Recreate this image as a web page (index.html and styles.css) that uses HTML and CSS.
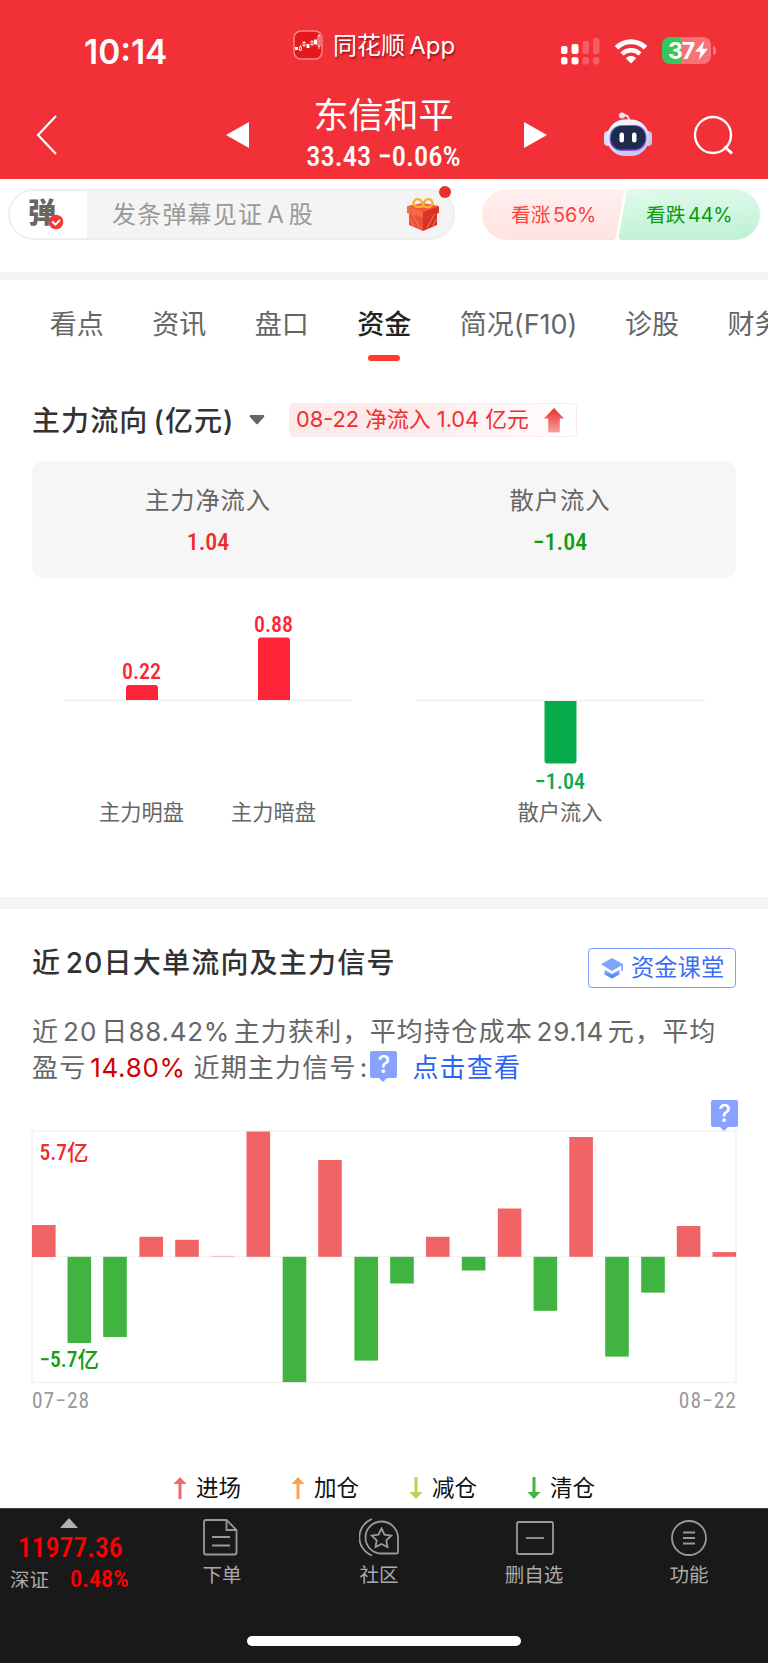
FILE: index.html
```html
<!DOCTYPE html>
<html lang="zh-CN">
<head>
    <meta charset="UTF-8">
    <title>东信和平 - 资金</title>
    <link rel="stylesheet" href="styles.css">
</head>
<body>
    <header class="header">
        <div class="status">
            <span class="time">10:14</span>
            <div class="app-name">
                <svg width="30" height="30" viewBox="0 0 30 30">
                    <rect x="1" y="1" width="28" height="28" rx="7" fill="#e5191d" stroke="#f88" stroke-width="1.4"/>
                    <g fill="#fff">
                        <rect x="2" y="17" width="3" height="3"/>
                        <rect x="13.500" y="14" width="3" height="4"/>
                        <rect x="21" y="9.500" width="3" height="5"/>
                    </g>
                    <g fill="#e5191d" stroke="#fff" stroke-width="0.8">
                        <path d="M7.500 15v6M11 11v6M19 10v6M26 4v15"/>
                        <rect x="6.500" y="17" width="2" height="3"/>
                        <rect x="10" y="12.500" width="2" height="3"/>
                        <rect x="18" y="11.500" width="2" height="3"/>
                        <rect x="25" y="6" width="2" height="10"/>
                    </g>
                </svg>
                <span>同花顺 App</span>
            </div>
            <div class="status-icons">
                <svg class="signal" width="39" height="28" viewBox="0 0 39 28" fill="#fff">
                    <rect x="0" y="9" width="6.500" height="8" rx="2"/>
                    <rect x="10.500" y="7" width="7" height="10" rx="2"/>
                    <rect x="0" y="20" width="6.500" height="7.500" rx="2.500"/>
                    <rect x="10.500" y="20" width="7" height="7.500" rx="2.500"/>
                    <g opacity="0.22">
                        <rect x="21.500" y="4" width="6.500" height="13" rx="2"/>
                        <rect x="32" y="1" width="6.500" height="16" rx="2"/>
                        <rect x="21.500" y="20" width="6.500" height="7.500" rx="2.500"/>
                        <rect x="32" y="20" width="6.500" height="7.500" rx="2.500"/>
                    </g>
                </svg>
                <svg class="wifi" width="34" height="25" viewBox="0 0 34 25">
                    <path d="M2.500 8.800a20.500 20.500 0 0 1 29 0" fill="none" stroke="#fff" stroke-width="5"/>
                    <path d="M8 15a12.800 12.800 0 0 1 18 0" fill="none" stroke="#fff" stroke-width="4.500"/>
                    <path d="M17 24.500l-5.200-5.300a7.500 7.500 0 0 1 10.400 0z" fill="#fff"/>
                </svg>
                <div class="battery">
                    <span>37</span>
                    <svg width="13" height="19" viewBox="0 0 12 18"><path d="M8.500 0L0 10.300h5L3.500 18 12 7.300H7z" fill="#fff"/></svg>
                </div>
                <i class="battery-cap"></i>
            </div>
        </div>
        <div class="nav">
            <svg class="back" width="24" height="42" viewBox="0 0 24 42"><path d="M21 2L3 21l18 19" fill="none" stroke="#fff" stroke-width="2.200"/></svg>
            <svg class="prev" width="23" height="26" viewBox="0 0 23 26"><path d="M23 0v26L0 13z" fill="#fff"/></svg>
            <div class="stock">
                <h1>东信和平</h1>
                <p class="num">33.43 −0.06%</p>
            </div>
            <svg class="next" width="23" height="26" viewBox="0 0 23 26"><path d="M0 0v26l23-13z" fill="#fff"/></svg>
            <svg class="robot" width="48" height="45" viewBox="0 0 48 45">
                <defs>
                    <linearGradient id="shell" x1="0" y1="0" x2="0.400" y2="1">
                        <stop offset="0" stop-color="#fff"/>
                        <stop offset="1" stop-color="#c9ccf0"/>
                    </linearGradient>
                    <linearGradient id="visor" x1="0" y1="0" x2="1" y2="1">
                        <stop offset="0" stop-color="#58c8f5"/>
                        <stop offset="0.400" stop-color="#7a3fd8"/>
                        <stop offset="1" stop-color="#8d6cf5"/>
                    </linearGradient>
                </defs>
                <path d="M18 3.500c5-1 7 1 7 6" fill="none" stroke="#dfe3fa" stroke-width="2"/>
                <circle cx="18" cy="3.500" r="3" fill="#dfe8fb"/>
                <rect x="0" y="19" width="8" height="15" rx="4" fill="#d9dbf7"/>
                <rect x="40" y="19" width="8" height="15" rx="4" fill="#c5c7f1"/>
                <rect x="3" y="7.500" width="42" height="36.500" rx="18" fill="url(#shell)"/>
                <rect x="5.500" y="13" width="37" height="26" rx="12" fill="url(#visor)"/>
                <rect x="6.800" y="14" width="34.500" height="23.500" rx="11" fill="#202a4c"/>
                <rect x="15.500" y="20.500" width="4.500" height="10" rx="2.200" fill="#fff"/>
                <rect x="28" y="20.500" width="4.500" height="10" rx="2.200" fill="#fff"/>
            </svg>
            <svg class="search" width="41" height="41" viewBox="0 0 41 41" fill="none" stroke="#fff" stroke-width="2.400">
                <circle cx="20" cy="20" r="18"/>
                <path d="M31.500 31.500l7.500 7" stroke-width="3"/>
            </svg>
        </div>
    </header>

    <div class="danmu">
        <div class="danmu-input">
            <div class="danmu-switch">
                <b>弹</b>
                <svg width="16" height="16" viewBox="0 0 16 16"><circle cx="8" cy="8" r="7.300" fill="#f33a30"/><path d="M4.200 7.500l3.200 3.200L12 6" fill="none" stroke="#fff" stroke-width="2"/></svg>
            </div>
            <span class="placeholder">发条弹幕见证 A 股</span>
            <svg class="gift" width="34" height="35" viewBox="0 0 34 35">
                <path d="M1 9l16-3 16 3-16 7z" fill="#f2573a"/>
                <path d="M1 9l16 6v6L1 16z" fill="#f4694a"/>
                <path d="M33 9l-16 6v6l16-5z" fill="#d93327"/>
                <path d="M3 16.500l14 4V34L3 28z" fill="#ee4f36"/>
                <path d="M31 16.500l-14 4V34l14-6z" fill="#d43325"/>
                <path d="M7 18l7 13M4 21l4 9M21 31l7-13M27 29l3-7" stroke="#f58a63" stroke-width="1.200" opacity="0.700"/>
                <path d="M17 9C10 11.500 6 8.500 8 4.500s8-3 9 4.500c1-7.500 7-8.500 9-4.500s-2 7-9 4.500z" fill="none" stroke="#f3b133" stroke-width="2.400"/>
            </svg>
            <i class="dot"></i>
        </div>
        <div class="vote">
            <svg class="vote-bg" width="278" height="51" viewBox="0 0 278 51">
                <defs>
                    <linearGradient id="up" x1="0" y1="0" x2="0" y2="1"><stop offset="0" stop-color="#fff0ef"/><stop offset="1" stop-color="#ffe3e0"/></linearGradient>
                    <linearGradient id="down" x1="0" y1="0" x2="0.150" y2="1"><stop offset="0" stop-color="#e2faec"/><stop offset="1" stop-color="#c1f2d6"/></linearGradient>
                </defs>
                <path d="M25.500 0H139q3.500 0 2.900 3.500L134.300 47q-.8 4-4 4H25.500a25.500 25.500 0 0 1 0-51z" fill="url(#up)"/>
                <path d="M149 0H252.500a25.500 25.500 0 0 1 0 51H140q-4 0-3.200-4L144.500 4q.8-4 4.500-4z" fill="url(#down)"/>
            </svg>
            <span class="vote-up">看涨 56%</span>
            <span class="vote-down">看跌 44%</span>
        </div>
    </div>

    <nav class="tabs">
        <span class="cut">?</span>
        <span>看点</span>
        <span>资讯</span>
        <span>盘口</span>
        <span class="active">资金</span>
        <span>简况(F10)</span>
        <span>诊股</span>
        <span>财务</span>
    </nav>

    <section class="flow">
        <div class="flow-head">
            <h2>主力流向 (亿元)</h2>
            <svg class="caret" width="16" height="10" viewBox="0 0 16 10"><path d="M1.500 0h13q1.500 0.500 .5 2L9 8.700q-1 1-2 0L1 2Q0 .5 1.500 0z" fill="#666"/></svg>
            <div class="tag">
                <span>08-22 净流入 1.04 亿元</span>
                <svg width="20" height="25" viewBox="0 0 20 25">
                    <defs><linearGradient id="arrow" x1="0" y1="0" x2="0" y2="1"><stop offset="0" stop-color="#e8302d"/><stop offset="1" stop-color="#f8a09e"/></linearGradient></defs>
                    <path d="M10 0l10 10.500h-4.200V23q0 1.500-1.500 1.500H5.700q-1.500 0-1.500-1.500V10.500H0z" fill="url(#arrow)"/>
                </svg>
            </div>
        </div>
        <div class="summary">
            <div>
                <p>主力净流入</p>
                <b class="num red">1.04</b>
            </div>
            <div>
                <p>散户流入</p>
                <b class="num green">−1.04</b>
            </div>
        </div>
        <svg class="flow-chart" width="704" height="250" viewBox="32 600 704 250">
            <path d="M64 700.500h288M416 700.500h289" stroke="#f0f0f0" stroke-width="1.500"/>
            <path d="M126 700v-12q0-3 3-3h26q3 0 3 3v12z" fill="#ff2436"/>
            <path d="M258 700v-59.500q0-3 3-3h26q3 0 3 3V700z" fill="#ff2436"/>
            <path d="M544.500 701v59.500q0 3 3 3h26q3 0 3-3V701z" fill="#08ab4b"/>
            <g class="bar-value">
                <text x="141.500" y="679" fill="#ff2436">0.22</text>
                <text x="273.500" y="632" fill="#ff2436">0.88</text>
                <text x="560" y="789" fill="#08ab4b">−1.04</text>
            </g>
            <g class="bar-name">
                <text x="141.500" y="820">主力明盘</text>
                <text x="273.500" y="820">主力暗盘</text>
                <text x="560" y="820">散户流入</text>
            </g>
        </svg>
    </section>

    <section class="orders">
        <div class="orders-head">
            <h2>近 20日大单流向及主力信号</h2>
            <a class="lesson">
                <svg width="22" height="21" viewBox="0 0 22 21">
                    <defs><linearGradient id="cap" x1="0" y1="0" x2="0" y2="1"><stop offset="0" stop-color="#8fb0ff"/><stop offset="1" stop-color="#4478fb"/></linearGradient></defs>
                    <path d="M11 0l11 6.300V13h-1.600V7.500L11 13 0 6.300z" fill="#7ea4ff"/>
                    <path d="M3.500 11.800L11 16l7.500-4.200v4.700L11 20.500l-7.500-4z" fill="url(#cap)"/>
                </svg>
                <span>资金课堂</span>
            </a>
        </div>
        <p class="desc">
            <span class="line">近 20 日<b>88.42%</b> 主力获利，平均持仓成本 <b>29.14</b> 元，平均</span>
            <span class="line">盈亏 <em>14.80%</em> 近期主力信号<span class="colon">:</span><i class="help">?</i><a>点击查看</a></span>
        </p>
        <div class="help-row"><i class="help">?</i></div>
        <svg class="orders-chart" width="706" height="254" viewBox="31 1130.500 706 254">
            <rect x="32" y="1131.500" width="704" height="251.500" fill="none" stroke="#f2f2f2" stroke-width="1.500"/>
            <path d="M32 1257.300h704" stroke="#f0f0f0"/>
            <g fill="#f06466">
                <rect x="32" y="1225.500" width="23.600" height="32"/>
                <rect x="139.400" y="1237.300" width="23.600" height="20"/>
                <rect x="175.200" y="1240.300" width="23.600" height="17"/>
                <rect x="211" y="1256.300" width="23.600" height="1" opacity="0.400"/>
                <rect x="246.500" y="1132" width="23.600" height="125.300"/>
                <rect x="318.200" y="1160.500" width="23.600" height="96.800"/>
                <rect x="426" y="1237.300" width="23.600" height="20"/>
                <rect x="497.800" y="1209" width="23.600" height="48.300"/>
                <rect x="569.300" y="1137.500" width="23.600" height="119.800"/>
                <rect x="676.800" y="1226.500" width="23.600" height="30.800"/>
                <rect x="712.500" y="1252.600" width="23.600" height="4.700"/>
            </g>
            <g fill="#41b341">
                <rect x="67.500" y="1257.300" width="23.600" height="86.200"/>
                <rect x="103.200" y="1257.300" width="23.600" height="80.200"/>
                <rect x="282.700" y="1257.300" width="23.600" height="125.300"/>
                <rect x="354.400" y="1257.300" width="23.600" height="103.800"/>
                <rect x="390.200" y="1257.300" width="23.600" height="26.700"/>
                <rect x="461.800" y="1257.300" width="23.600" height="13.700"/>
                <rect x="533.600" y="1257.300" width="23.600" height="54"/>
                <rect x="605.200" y="1257.300" width="23.600" height="99.800"/>
                <rect x="641.200" y="1257.300" width="23.600" height="35.800"/>
            </g>
            <text class="axis" x="39.500" y="1160.500" fill="#ee2c2c">5.7亿</text>
            <text class="axis" x="39.500" y="1367.500" fill="#129c12">−5.7亿</text>
        </svg>
        <div class="dates num">
            <span>07−28</span>
            <span>08−22</span>
        </div>
        <div class="legend">
            <span><svg width="14" height="22" viewBox="0 0 14 22"><path d="M7 0l6.500 7H8.500v15h-3V7H.5z" fill="#f0696b"/></svg>进场</span>
            <span><svg width="14" height="22" viewBox="0 0 14 22"><path d="M7 0l6.500 7H8.500v15h-3V7H.5z" fill="#fda14f"/></svg>加仓</span>
            <span><svg width="14" height="22" viewBox="0 0 14 22"><path d="M7 22l6.500-7H8.500V0h-3v15H.5z" fill="#b3d552"/></svg>减仓</span>
            <span><svg width="14" height="22" viewBox="0 0 14 22"><path d="M7 22l6.500-7H8.500V0h-3v15H.5z" fill="#45b444"/></svg>清仓</span>
        </div>
    </section>

    <footer class="toolbar">
        <div class="index">
            <svg width="18" height="10" viewBox="0 0 18 10"><path d="M9 0l9 10H0z" fill="#b0b0b0"/></svg>
            <b class="num index-value">11977.36</b>
            <div class="index-row"><span>深证</span><b class="num">0.48%</b></div>
        </div>
        <div class="tool tool-order">
            <svg width="40" height="40" viewBox="0 0 40 40">
                <path d="M4 3H24.500l10 10V35.500q0 2-2 2H4q-2 0-2-2V5q0-2 2-2z"/>
                <path d="M24.500 3v10h10M10 20h18M10 28.500h18"/>
            </svg>
            <span>下单</span>
        </div>
        <div class="tool tool-club">
            <svg width="40" height="40" viewBox="0 0 40 40">
                <path d="M22.500 4.500A16.500 16.500 0 0 1 39 21v14q0 1.500-1.500 1.500H22.500a16 16 0 0 1 0-32z"/>
                <path d="M13 2A19.500 19.500 0 0 0 13 38.500"/>
                <path d="M22.500 11.500l3 6.200 6.800 1-5 4.700 1.200 6.700-6-3.200-6 3.200 1.200-6.700-5-4.700 6.800-1z"/>
            </svg>
            <span>社区</span>
        </div>
        <div class="tool tool-del">
            <svg width="40" height="40" viewBox="0 0 40 40"><rect x="3" y="5" width="36" height="32" rx="1.500"/><path d="M12 21h18"/></svg>
            <span>删自选</span>
        </div>
        <div class="tool tool-more">
            <svg width="40" height="40" viewBox="0 0 40 40"><circle cx="20" cy="21" r="17"/><path d="M14 15.500h12M14 21h12M14 26.500h12"/></svg>
            <span>功能</span>
        </div>
        <i class="home-bar"></i>
    </footer>
</body>
</html>
```
FILE: styles.css
```css
* {
    box-sizing: border-box;
}

body {
    margin: 0;
    width: 768px;
    height: 1663px;
    overflow: hidden;
    background-color: #fff;
    color: #323232;
    font-family: Inter, "Noto Sans CJK SC", sans-serif;
    display: flex;
    flex-direction: column;
}

h1, h2, p {
    margin: 0;
}

i, em {
    font-style: normal;
}

svg {
    display: block;
    flex-shrink: 0;
}

.num {
    font-family: Roboto, "Noto Sans CJK SC", sans-serif;
    font-stretch: 85%;
    font-weight: 500;
}

.red {
    color: #ee2c2c;
}

.green {
    color: #129c12;
}

/* Header */
.header {
    height: 179px;
    flex-shrink: 0;
    background-color: #f23038;
    color: #fff;
}

.status {
    display: flex;
    height: 90px;
    padding: 30px 52px 0 84px;
}

.time {
    width: 209px;
    padding-top: 2px;
    font-size: 33.5px;
    font-weight: 600;
    line-height: 40px;
}

.app-name {
    display: flex;
    gap: 10px;
    width: 268px;
    height: 30px;
    font-size: 24px;
    line-height: 31px;
    word-spacing: -2.5px;
    white-space: nowrap;
    text-shadow: 1px 2px 2px rgba(90, 0, 0, 0.6);
}

.status-icons {
    display: flex;
    padding-top: 7px;
}

.wifi {
    margin: 2px 14px 0 14px;
}

.battery {
    display: flex;
    align-items: center;
    gap: 1px;
    width: 49px;
    height: 27px;
    padding-left: 6px;
    border-radius: 8px;
    background: linear-gradient(90deg, #35c759 38%, #f87177 38%);
    font-size: 23px;
    font-weight: 700;
    letter-spacing: -1px;
}

.battery-cap {
    width: 3px;
    height: 9px;
    margin: 9px 0 0 2px;
    border-radius: 0 4px 4px 0;
    background-color: #f87177;
}

.nav {
    display: flex;
    height: 89px;
    padding-left: 35px;
}

.back {
    margin-top: 24px;
}

.prev {
    margin: 32px 0 0 167px;
}

.stock {
    width: 275px;
    padding-right: 6px;
    text-align: center;
}

.stock h1 {
    font-size: 35px;
    font-weight: 400;
    line-height: 50px;
}

.stock .num {
    font-size: 28.5px;
    line-height: 34px;
}

.next {
    margin-top: 32px;
}

.robot {
    margin: 22px 0 0 57px;
}

.search {
    margin: 25px 0 0 41px;
}

/* Danmu bar */
.danmu {
    display: flex;
    gap: 27px;
    height: 101px;
    padding: 10px 8px 0;
    flex-shrink: 0;
    border-bottom: 8px solid #f4f4f4;
}

.danmu-input {
    position: relative;
    display: flex;
    width: 447px;
    height: 51px;
    border: 2px solid #efefef;
    border-radius: 26px;
    background-color: #f4f4f4;
}

.danmu-switch {
    position: relative;
    width: 77px;
    padding-left: 18px;
    border-radius: 24px 0 0 24px;
    background-color: #fff;
    color: #666;
    font-size: 28px;
    line-height: 44px;
}

.danmu-switch b {
    font-weight: 900;
}

.danmu-switch svg {
    position: absolute;
    left: 38px;
    top: 23px;
}

.placeholder {
    padding-left: 25px;
    width: 309px;
    color: #999;
    font-size: 24px;
    line-height: 48px;
    letter-spacing: 1.2px;
    word-spacing: -4px;
    white-space: nowrap;
}

.gift {
    margin: 6px 0 0 10px;
}

.dot {
    position: absolute;
    right: 2px;
    top: -5px;
    width: 12px;
    height: 12px;
    border-radius: 50%;
    background-color: #e8302d;
}

.vote {
    position: relative;
    display: flex;
    width: 278px;
    height: 51px;
    font-size: 19.7px;
    line-height: 53px;
    word-spacing: -3px;
}

.vote-bg {
    position: absolute;
    left: 0;
    top: 0;
    z-index: -1;
}

.vote-up {
    width: 136px;
    padding-left: 29px;
    color: #ff4040;
}

.vote-down {
    padding-left: 28px;
    color: #0a9a0a;
}

/* Tabs */
.tabs {
    display: flex;
    gap: 48.5px;
    height: 104px;
    padding-top: 25px;
    flex-shrink: 0;
    overflow: hidden;
    color: #666;
    font-size: 27px;
    line-height: 40px;
    white-space: nowrap;
}

.tabs .cut {
    width: 16px;
    margin-left: -13px;
    margin-right: 0.5px;
    text-align: right;
}

.tabs .active {
    color: #222;
    font-weight: 500;
}

.tabs .active::after {
    content: "";
    display: block;
    width: 32px;
    height: 6px;
    margin: 10px auto 0;
    border-radius: 3px;
    background-color: #ff3b30;
}

.tabs span:nth-child(7) {
    margin-left: -1px;
}

/* Main capital flow */
.flow {
    height: 525px;
    padding: 19px 32px 0;
    flex-shrink: 0;
    border-bottom: 12px solid #f4f4f4;
}

.flow-head {
    display: flex;
    align-items: center;
    height: 34px;
}

.flow-head h2 {
    width: 217px;
    padding-top: 1px;
    font-size: 28px;
    font-weight: 500;
    line-height: 34px;
    letter-spacing: 1.1px;
    word-spacing: -3.5px;
    white-space: nowrap;
}

.caret {
    margin-right: 24px;
}

.tag {
    display: flex;
    align-items: center;
    width: 288px;
    height: 34px;
    padding-left: 6px;
    border: 1px solid #fdeaea;
    border-radius: 4px;
    background: linear-gradient(90deg, #fdeaea 40%, #fff);
    color: #ee3030;
    font-size: 21.8px;
    line-height: 30px;
    white-space: nowrap;
}

.tag span {
    width: 248px;
    padding-bottom: 2px;
}

.summary {
    display: grid;
    grid-template-columns: 1fr 1fr;
    height: 117px;
    margin-top: 24px;
    padding-top: 19px;
    border-radius: 12px;
    background-color: #f6f6f6;
    color: #666;
    text-align: center;
}

.summary p {
    font-size: 24.3px;
    line-height: 40px;
    letter-spacing: 0.9px;
}

.summary .num {
    display: block;
    margin-top: 5px;
    font-size: 24px;
    line-height: 35px;
}

.flow-chart {
    margin-top: 22px;
}

.flow-chart text {
    text-anchor: middle;
}

.bar-value {
    font-family: Roboto, sans-serif;
    font-stretch: 85%;
    font-size: 22px;
    font-weight: 500;
}

.bar-name {
    font-size: 21.2px;
    fill: #666;
}

/* Large orders over 20 days */
.orders {
    height: 599px;
    padding: 39px 32px 0;
    flex-shrink: 0;
}

.orders-head {
    display: flex;
    justify-content: space-between;
}

.orders-head h2 {
    font-size: 28px;
    font-weight: 500;
    line-height: 30px;
    letter-spacing: 1.2px;
    word-spacing: -4px;
}

.lesson {
    display: flex;
    align-items: center;
    gap: 8px;
    width: 148px;
    height: 40px;
    padding-left: 12px;
    border: 1.5px solid #7f9dff;
    border-radius: 4px;
    color: #3c6cf5;
    font-size: 23.3px;
    line-height: 34px;
    white-space: nowrap;
}

.desc {
    margin-top: 26px;
    color: #666;
    font-size: 26px;
    letter-spacing: 1.2px;
    word-spacing: -4.8px;
}

.desc b, .desc em {
    font-weight: 400;
    letter-spacing: 0.7px;
}

.line {
    display: block;
    height: 35.5px;
    line-height: 35.5px;
    white-space: nowrap;
}

.desc em {
    margin-right: 4px;
    color: #d00000;
}

.desc a {
    margin-left: 15px;
    color: #2c62f5;
}

.colon {
    margin: 0 2px 0 3px;
}

.help {
    position: relative;
    display: inline-block;
    width: 27px;
    height: 27px;
    border-radius: 2px;
    background-color: #88a3ff;
    color: #fff;
    font-size: 24px;
    font-weight: 500;
    line-height: 28px;
    letter-spacing: 0;
    text-align: center;
    vertical-align: 4px;
}

.help::after {
    content: "";
    position: absolute;
    left: 9px;
    top: 27px;
    border: 4.5px solid transparent;
    border-top-color: #88a3ff;
    border-bottom: 0;
}

.help-row {
    display: flex;
    justify-content: flex-end;
    height: 45px;
    margin-right: -2px;
    padding-top: 14.5px;
}

.orders-chart {
    margin-left: -1px;
}

.axis {
    font-family: Roboto, "Noto Sans CJK SC", sans-serif;
    font-stretch: 85%;
    font-size: 21.5px;
    font-weight: 500;
}

.dates {
    display: flex;
    justify-content: space-between;
    margin-top: 1.5px;
    color: #999;
    font-size: 21.5px;
    font-weight: 400;
    line-height: 30px;
    letter-spacing: 1px;
}

.dates span:last-child {
    margin-right: -1px;
}

.legend {
    display: flex;
    gap: 50px;
    margin: 57px 0 0 141px;
    color: #111;
    font-size: 22.5px;
    line-height: 30px;
}

.legend span {
    display: flex;
    align-items: center;
    gap: 9px;
}

/* Bottom toolbar */
.toolbar {
    position: relative;
    display: flex;
    flex: 1;
    border-top: 1px solid #444;
    background-color: #191919;
    color: #aaa;
    font-size: 19.5px;
}

.index {
    width: 182px;
    padding-top: 9px;
}

.index svg {
    margin-left: 60px;
}

.index .num {
    color: #f00;
}

.index-value {
    display: block;
    margin: 4px 0 0 18px;
    font-size: 27.7px;
    line-height: 32px;
}

.index-row {
    display: flex;
    align-items: center;
    height: 28px;
    padding-left: 10px;
}

.index-row .num {
    margin-left: 21px;
    font-size: 24.3px;
}

.tool {
    display: flex;
    flex-direction: column;
    align-items: center;
    width: 80px;
    padding-top: 8px;
}

.tool svg {
    fill: none;
    stroke: #999;
    stroke-width: 1.8;
}

.tool span {
    margin-top: 3px;
    line-height: 30px;
}

.tool-club {
    margin-left: 77px;
}

.tool-del {
    margin-left: 75px;
}

.tool-more {
    margin-left: 75px;
}

.home-bar {
    position: absolute;
    left: 247px;
    bottom: 17px;
    width: 274px;
    height: 10px;
    border-radius: 5px;
    background-color: #fff;
}
```
